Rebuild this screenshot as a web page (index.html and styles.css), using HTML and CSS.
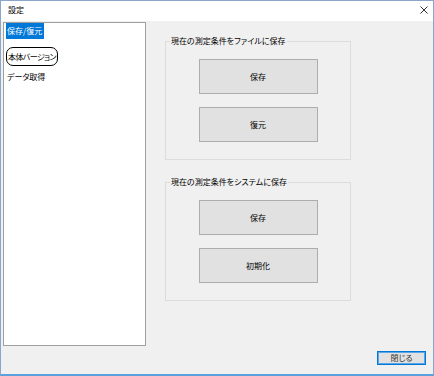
FILE: index.html
```html
<!DOCTYPE html>
<html lang="ja">
<head>
    <meta charset="UTF-8">
    <title>設定</title>
    <link rel="stylesheet" href="styles.css">
</head>
<body>
    <div class="window">
        <div class="titlebar">
            <span class="title">設定</span>
            <svg class="close" width="8" height="8" viewBox="0 0 8 8">
                <path d="M0.5 0.5L7.5 7.5M7.5 0.5L0.5 7.5" stroke="#333" stroke-width="1" fill="none"/>
            </svg>
        </div>
        <div class="client">
            <div class="main">
                <ul class="listbox">
                    <li class="item selected">保存/復元</li>
                    <li class="item marked">本体バージョン</li>
                    <li class="item">データ取得</li>
                </ul>
                <div class="panel">
                    <div class="group">
                        <div class="group-title">現在の測定条件をファイルに保存</div>
                        <button class="btn">保存</button>
                        <button class="btn">復元</button>
                    </div>
                    <div class="group second">
                        <div class="group-title">現在の測定条件をシステムに保存</div>
                        <button class="btn">保存</button>
                        <button class="btn">初期化</button>
                    </div>
                </div>
            </div>
            <div class="footer">
                <button class="close-btn">閉じる</button>
            </div>
        </div>
    </div>
</body>
</html>
```

FILE: styles.css
```css
*{
    margin: 0;
    padding: 0;
    box-sizing: border-box;
}
body{
    font-family: "Noto Sans CJK JP", "Noto Sans", sans-serif;
    font-size: 8px;
    font-feature-settings: "palt";
    color: #000;
    background: #fff;
}
.window{
    width: 434px;
    height: 376px;
    display: flex;
    flex-direction: column;
    border: 1px solid #8aa6c8;
    border-bottom: 2px solid #5aa0dc;
}
.titlebar{
    height: 20px;
    background: #fff;
    display: flex;
    align-items: center;
    justify-content: space-between;
    padding: 0 5px 2px 7px;
}
.title{
    line-height: 10px;
}
.client{
    flex: 1;
    background: #f0f0f0;
    padding: 1px 7px 0 2px;
    display: flex;
    flex-direction: column;
}
.main{
    display: flex;
}
.listbox{
    list-style: none;
    width: 143px;
    height: 324px;
    background: #fff;
    border: 1px solid #a0a0a0;
    padding-left: 2px;
}
.item{
    width: fit-content;
    line-height: 16px;
    padding: 0 2px 0 1px;
    margin-bottom: 8px;
}
.item.selected{
    background: #0078d7;
    color: #fff;
}
/* 手書きの丸囲み */
.item.marked{
    margin-left: 0;
    line-height: 17px;
    padding: 0 1px 0 1px;
    letter-spacing: -0.6px;
    border: 1.5px solid #000;
    border-radius: 7px;
    margin-bottom: 3px;
}
.panel{
    padding: 19px 0 0 19px;
}
.group{
    width: 186px;
    border: 1px solid #dcdcdc;
    display: flex;
    flex-direction: column;
    align-items: center;
    padding-bottom: 17px;
}
.group.second{
    margin-top: 22px;
}
.group-title{
    align-self: flex-start;
    margin: -6px 0 0 4px;
    padding: 0 1px;
    line-height: 10px;
    background: #f0f0f0;
}
.btn{
    width: 119px;
    height: 35px;
    margin-top: 13px;
    background: #e1e1e1;
    border: 1px solid #adadad;
    font: inherit;
    color: #000;
}
.footer{
    display: flex;
    justify-content: flex-end;
    padding-top: 5px;
}
.close-btn{
    width: 49px;
    height: 14px;
    background: #e1e1e1;
    border: 1px solid #0078d7;
    box-shadow: inset 0 0 0 1px #5aa6e8;
    font: inherit;
    line-height: 10px;
    color: #333;
}
```
